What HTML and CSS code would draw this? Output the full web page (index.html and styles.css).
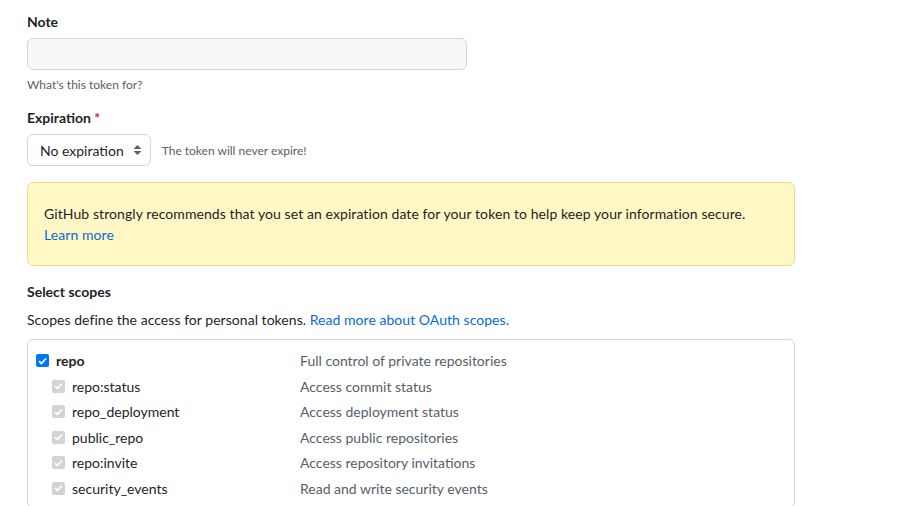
FILE: index.html
```html
<!DOCTYPE html>
<html>
<head>
<meta charset="utf-8">
<link rel="stylesheet" href="styles.css">
</head>
<body>
<div class="page">
  <div class="field">
    <label class="label">Note</label>
    <div class="input"></div>
    <p class="note">What's this token for?</p>
  </div>
  <div class="field">
    <label class="label">Expiration <span class="req">*</span></label>
    <div class="select-row">
      <div class="select">No expiration
        <svg class="arrows" width="9" height="12" viewBox="0 0 9 12"><path d="M4.5 1 L8.5 5 H0.5 Z M4.5 11 L0.5 7 H8.5 Z" fill="#57606a"/></svg>
      </div>
      <span class="hint">The token will never expire!</span>
    </div>
  </div>
  <div class="flash">
    <p>GitHub strongly recommends that you set an expiration date for your token to help keep your information secure.</p>
    <a class="link">Learn more</a>
  </div>
  <h3 class="label scopes-title">Select scopes</h3>
  <p class="desc">Scopes define the access for personal tokens. <a class="link">Read more about OAuth scopes.</a></p>
  <div class="box">
    <div class="row main">
      <span class="cell name"><span class="cb on"><svg width="9" height="8" viewBox="0 0 9 8"><path d="M1 4.2 L3.4 6.5 L8 1.5" stroke="#fff" stroke-width="1.8" fill="none"/></svg></span><b>repo</b></span>
      <span class="cell d">Full control of private repositories</span>
    </div>
    <div class="row sub">
      <span class="cell name"><span class="cb dis"><svg width="9" height="8" viewBox="0 0 9 8"><path d="M1 4.2 L3.4 6.5 L8 1.5" stroke="#fff" stroke-width="1.8" fill="none"/></svg></span>repo:status</span>
      <span class="cell d">Access commit status</span>
    </div>
    <div class="row sub">
      <span class="cell name"><span class="cb dis"><svg width="9" height="8" viewBox="0 0 9 8"><path d="M1 4.2 L3.4 6.5 L8 1.5" stroke="#fff" stroke-width="1.8" fill="none"/></svg></span>repo_deployment</span>
      <span class="cell d">Access deployment status</span>
    </div>
    <div class="row sub">
      <span class="cell name"><span class="cb dis"><svg width="9" height="8" viewBox="0 0 9 8"><path d="M1 4.2 L3.4 6.5 L8 1.5" stroke="#fff" stroke-width="1.8" fill="none"/></svg></span>public_repo</span>
      <span class="cell d">Access public repositories</span>
    </div>
    <div class="row sub">
      <span class="cell name"><span class="cb dis"><svg width="9" height="8" viewBox="0 0 9 8"><path d="M1 4.2 L3.4 6.5 L8 1.5" stroke="#fff" stroke-width="1.8" fill="none"/></svg></span>repo:invite</span>
      <span class="cell d">Access repository invitations</span>
    </div>
    <div class="row sub">
      <span class="cell name"><span class="cb dis"><svg width="9" height="8" viewBox="0 0 9 8"><path d="M1 4.2 L3.4 6.5 L8 1.5" stroke="#fff" stroke-width="1.8" fill="none"/></svg></span>security_events</span>
      <span class="cell d">Read and write security events</span>
    </div>
  </div>
</div>
</body>
</html>
```
FILE: styles.css
```css
* { box-sizing: border-box; }
body {
  margin: 0;
  background: #fff;
  font-family: Lato, "Liberation Sans", sans-serif;
  font-size: 14px;
  color: #1f2328;
}
.page {
  padding: 12px 0 0 27px;
  width: 795px;
}
.field { margin-bottom: 12px; }
.field:first-child { margin-bottom: 14px; }
.label {
  display: block;
  font-weight: 700;
  font-size: 14px;
  line-height: 20px;
  margin: 0 0 6px;
}
.req { color: #cf222e; }
.input {
  width: 440px;
  height: 32px;
  background: #f6f8fa;
  border: 1px solid #d0d7de;
  border-radius: 6px;
}
.note {
  margin: 6px 0 0;
  font-size: 12px;
  color: #57606a;
  line-height: 18px;
}
.select-row {
  display: flex;
  align-items: center;
  gap: 11px;
}
.select {
  display: flex;
  align-items: center;
  gap: 9px;
  height: 32px;
  padding: 0 8px 0 12px;
  border: 1px solid #d0d7de;
  border-radius: 6px;
  font-size: 14px;
  color: #1f2328;
}
.hint { font-size: 12px; color: #57606a; }
.flash {
  margin-top: 16px;
  background: #fff8c5;
  border: 1px solid #eedc8a;
  border-radius: 6px;
  padding: 20px 16px 20px 16px;
  line-height: 21px;
  letter-spacing: 0.08px;
}
.flash p { margin: 0; }
.link { color: #0969da; text-decoration: none; }
.scopes-title { margin: 16px 0 7px; }
.desc { margin: 0 0 9px; line-height: 21px; letter-spacing: 0.04px; }
.box {
  border: 1px solid #d0d7de;
  border-radius: 6px;
  padding: 8px 0 6px 8px;
}
.row {
  display: flex;
  align-items: center;
  height: 25.5px;
}
.cell.name {
  display: flex;
  align-items: center;
  width: 264px;
}
.row.sub .cell.name { padding-left: 16px; }
.cell.d { color: #57606a; }
.cb {
  width: 13px;
  height: 13px;
  border-radius: 2px;
  display: flex;
  align-items: center;
  justify-content: center;
  margin-right: 7px;
}
.cb.on { background: #0075ff; }
.cb.dis { background: #d3d3d3; }
.row.main b { font-weight: 700; }
```
